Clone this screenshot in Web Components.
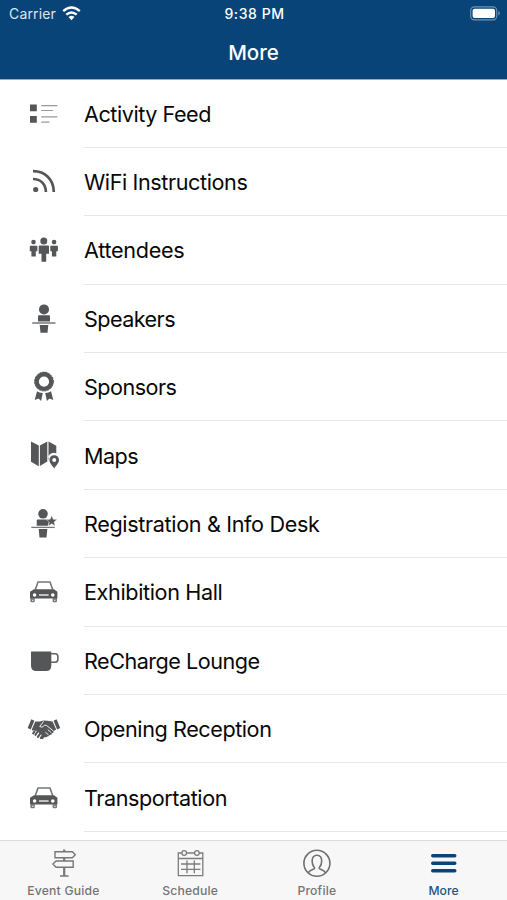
<!DOCTYPE html>
<html lang="en">
<head>
<meta charset="utf-8">
<title>More</title>
<style>
html,body{margin:0;height:100%;overflow:hidden;background:#fff}
body{font-family:Inter,"Liberation Sans",sans-serif}
</style>
</head>
<body>
<more-screen></more-screen>
<script>
const car = `<path d="M11.2 18 14 10h12l2.8 8" fill="none" stroke="#777" stroke-width="1.6"/><path d="M10 17.2h20l3.4 2.6v6.8H6v-6.8z" /><path d="M6.4 26v3.2q0 1 1 1h2.4q1 0 1-1V26zM28.6 26v3.2q0 1 1 1H32q1 0 1-1V26z" fill="#777"/><path d="M8 28.3h1.5M30 28.3h1.5" stroke="#eee"/><circle cx="10.6" cy="23" r="1.8" fill="#fff"/><circle cx="28.8" cy="23" r="1.8" fill="#fff"/><path d="M15 23h9.6" stroke="#ddd" stroke-width="1.6"/>`;
const ICONS = {
feed:`<path d="M6 10.5h6.8v6.8H6zM6 22h6.8v6.8H6z"/><path d="M17.2 11.6h16.2M17.2 16.5h11.8M17.2 22.9h16.2M17.2 28.2h8.2" stroke="#999" stroke-width="1.2"/>`,
wifi:`<circle cx="11.7" cy="27.5" r="2.6"/><path d="M9 17c7.8 0 12.9 5.2 12.9 13.1M9 9.2c12.3 0 20.8 8.6 20.8 20.9" fill="none" stroke="#555658" stroke-width="2.7"/>`,
people:`<circle cx="19.8" cy="11" r="3.5"/><path d="M15.6 15.6h8.5q.9 0 .9.9v7.2h-2.8v8h-4.7v-8h-2.8v-7.2q0-.9.9-.9z"/><circle cx="9.5" cy="12.1" r="2.3"/><circle cx="30.1" cy="12.1" r="2.3"/><path d="M6.3 15.7h6.5q.6 0 .6.6v5h-1.6v5.2H7.4v-5.2H5.8v-5q0-.6.5-.6zM26.8 15.7h6.5q.6 0 .6.6v5h-1.6v5.2h-4.4v-5.2h-1.6v-5q0-.6.5-.6z"/>`,
speaker:`<circle cx="20" cy="10.4" r="5"/><path d="M15 16.3h10q1 0 1 1v5.2H14v-5.2q0-1 1-1zM15.7 26h8.6l-.8 7.7h-7z"/><path d="M8.2 24h23.3" stroke="#999" stroke-width="2"/>`,
sponsor:`<circle cx="20" cy="14.6" r="7.3" fill="none" stroke="#555658" stroke-width="4.4"/><circle cx="20" cy="14.6" r="9.4" fill="none" stroke="#555658" stroke-width="1" stroke-dasharray="2.2 .8"/><path d="M13 24.2q2.6 2 5.8 1.8l-1.7 7.9-2.6-2.5-3.8 1.5zM27 24.2q-2.6 2-5.8 1.8l1.7 7.9 2.6-2.5 3.8 1.5z"/>`,
map:`<path d="m7 5.4 7.8 4.1v20.7L7 25.7zM15.9 9.5l7.4-4v20.1l-7.4 4.5zM24.5 5.5l7.8 4.2v7.6c-5-2.2-9.5 2.2-7.8 7.3z"/><path fill-rule="evenodd" d="M30.2 32.4c-1.1-2-4.8-5-4.8-8.4a4.8 4.8 0 0 1 9.6 0c0 3.4-3.7 6.4-4.8 8.4zm0-6.4a2 2 0 1 0 0-4 2 2 0 0 0 0 4z"/>`,
desk:`<g transform="translate(0 -2.6)"><circle cx="19" cy="12.4" r="4.8"/><path d="M13.7 18.2h9.4l2 2-1.3 4.2H12.7v-5.2q0-1 1-1zM14.7 27.7h8.6l-.8 8.4h-7z"/><path d="M7.3 26h23.4" stroke="#777" stroke-width="1.3"/><path d="m27.7 14 1.5 3.8 4 .2-3.1 2.5 1 4-3.4-2.2-3.4 2.2 1-4-3.1-2.5 4-.2z" stroke="#fff" stroke-width=".4"/></g>`,
car,
cup:`<path d="M7 10.4h20.3v14q0 5.6-5.3 5.6h-9.6Q7 30 7 24.4z"/><path d="M27 12.7h4.2q2.7 0 2.7 3v2.4q0 3.1-2.7 3.1H27" fill="none" stroke="#606163" stroke-width="1.6"/>`,
hands:`<path d="m7.3 10.3 3.1 1.5-3.7 8.6-3-1.5zM32.6 10.3l-3.1 1.5 3.7 8.6 3-1.5z"/><path d="m11.3 12.5 4.4.1 4-1.1 3.7.3 5.2.8 3.6 8-2.4 1.5q.4 2-1.7 2.2-.3 2-2.4 1.8-.8 1.9-2.6 1.3-1.2 1.5-2.7.6l-1.2 1.7q-1.5.9-2.6-.5l1.2-2.4q0-1.8-2-1.8 0-1.8-2-1.8-.3-2-2.5-1.2-1-1.3-2.7-.3L7.8 20.5z"/><path d="m19.6 12.3-3.9 5.2q2.3 2 4.8-1.2l2 .1 7.2 5.8M21.3 23.2l3.3 2.7M23.8 20.7l3.5 3" fill="none" stroke="#fff" stroke-width=".9"/><path d="m10.4 22.5-1.2 1.9M13.3 23l-1.8 2.8M16 24.8l-2.1 3M18.4 26.8l-1.6 2.2" stroke="#555658" stroke-width="2.1" stroke-linecap="round"/>`,
guide:`<g fill="none" stroke="#777" stroke-width="1.4"><path d="M12 8.8h17.3l3 3-3 3H12zM30.2 18H13.1l-3.2 3.1 3.2 3.2h17.1z"/><path d="M21.2 6.4v2.4M21.2 14.8V18M21.2 24.3v8.6" stroke-width="2.2"/><path d="M17 33h8.6" stroke-width="1.5"/></g>`,
calendar:`<g fill="none" stroke="#7c7c7c" stroke-width="1.3"><path d="M12 10H8.3v22.7h24.5V10h-3.6M16.5 10h8.1M8.3 15.5h24.5M11 21h19.4M11 26.4h19.4M17 17.5v12.8M24.3 17.5v12.8"/><circle cx="14.2" cy="10" r="2.3"/><circle cx="26.9" cy="10" r="2.3"/></g>`,
profile:`<g fill="none" stroke="#707070" stroke-width="1.6"><circle cx="19.9" cy="20.3" r="13"/><path d="M11.3 29.8c.8-2.2 3.1-2.9 5.6-3.9q1.2-.6.2-2c-1.2-1.5-2-3.5-2-6 0-3.4 1.9-5.7 4.8-5.7s4.8 2.3 4.8 5.7c0 2.5-.8 4.5-2 6q-1 1.4.2 2c2.5 1 4.8 1.7 5.6 3.9"/></g>`,
menu:`<path d="M8.7 12.7h22.1M8.7 20.2h22.1M8.7 27.7h22.1" stroke="#0b427a" stroke-width="3.4" stroke-linecap="round"/>`
};
function define(name, css, html, ready){
  const t = document.createElement('template');
  t.innerHTML = `<style>${css}</style>${html}`;
  customElements.define(name, class extends HTMLElement{
    connectedCallback(){
      if(this.shadowRoot) return;
      this.attachShadow({mode:'open'}).append(t.content.cloneNode(true));
      if(ready) ready(this, this.shadowRoot);
    }
  });
}
// Spreads the letters of a label over the width given in its "fit" attribute.
function fit(host, el){
  const w = parseFloat(host.getAttribute('fit'));
  if(!w) return;
  const n = host.textContent.trim().length;
  el.style.letterSpacing = ((w - el.getBoundingClientRect().width) / n).toFixed(3) + 'px';
}
define('ui-icon', `:host{display:block;width:40px;height:40px;flex:none}svg{display:block}`,
  `<svg width="40" height="40" viewBox="0 0 40 40" fill="#555658"></svg>`,
  (h, r) => { r.querySelector('svg').innerHTML = ICONS[h.getAttribute('name')]; });
define('fit-text', `:host{display:block;white-space:nowrap}span{display:inline-block}`, `<span><slot></slot></span>`,
  (h, r) => fit(h, r.querySelector('span')));
define('status-bar', `:host{display:grid;grid-template-columns:1fr auto 1fr;align-items:center;height:27px;padding:0 7px 0 9px;color:#fff;font-size:14px}
.l{display:flex;align-items:center;gap:6px;color:#dce6ef}.r{justify-self:end}svg{display:block}.t{font-weight:500}`,
 `<div class="l"><fit-text fit="47">Carrier</fit-text><svg width="19" height="15" viewBox="0 0 19 15" fill="none" stroke="#fff" stroke-width="2.4"><path d="M1.2 5.2q8.3-7.3 16.6 0M4.3 8.7q5.2-4.6 10.4 0"/><path d="m9.5 14.2-3-3.2q3-2.4 6 0z" fill="#fff" stroke="none"/></svg></div>
<fit-text class="t" fit="60">9:38 PM</fit-text>
<div class="r"><svg width="30" height="15" viewBox="0 0 30 15"><rect x=".7" y=".9" width="26" height="13" rx="3.6" fill="none" stroke="#6f93b3" stroke-width="1.1"/><rect x="2.6" y="2.8" width="22.4" height="9.2" rx="2" fill="#fff"/><path d="M28.3 5v4.6q1.5-.6 1.5-2.3T28.3 5z" fill="#6f93b3"/></svg></div>`);
define('nav-header', `:host{display:block;height:80px;background:#094479;color:#fff;box-sizing:border-box;border-bottom:1px solid #8fadc8}
.title{display:flex;justify-content:center;align-items:center;height:51px;font-size:20.5px;font-weight:500}`,
 `<status-bar></status-bar><div class="title"><fit-text fit="49.5"><slot></slot></fit-text></div>`);
define('menu-row', `:host{display:flex;height:68.4px;padding-left:23.6px;box-sizing:border-box;align-items:stretch;color:#080808;font-size:21.6px}
ui-icon{align-self:center}
.body{flex:1;display:flex;align-items:center;box-sizing:border-box;margin-left:20.4px;padding-top:1px;border-bottom:1px solid #e6e6e7}`,
 `<ui-icon></ui-icon><div class="body"><span><slot></slot></span></div>`,
 (h, r) => { const o = r.querySelector('ui-icon'), i = document.createElement('ui-icon'); i.setAttribute('name', h.getAttribute('icon')); o.replaceWith(i); fit(h, r.querySelector('span')); });
define('tab-item', `:host{flex:1;display:flex;flex-direction:column;align-items:center;color:#757575;font-size:12.2px;font-weight:500}
:host([active]){color:#24527f}span{line-height:16px;white-space:nowrap}`,
 `<ui-icon></ui-icon><span><slot></slot></span>`,
 (h, r) => { const o = r.querySelector('ui-icon'), i = document.createElement('ui-icon'); i.setAttribute('name', h.getAttribute('icon')); o.replaceWith(i); fit(h, r.querySelector('span')); });
define('tab-bar', `:host{display:flex;flex:none;height:60px;box-sizing:border-box;padding-top:2px;border-top:1px solid #dcdcdc;background:#f7f7f7}`, `<slot></slot>`);
define('more-screen', `:host{display:flex;flex-direction:column;width:507px;height:900px;background:#fff;overflow:hidden}
nav-header{flex:none}main{flex:1;min-height:0;overflow:hidden}menu-row:first-child{height:67.9px}`,
`<nav-header>More</nav-header>
<main>
<menu-row icon="feed" fit="127">Activity Feed</menu-row>
<menu-row icon="wifi" fit="163.5">WiFi Instructions</menu-row>
<menu-row icon="people" fit="100.5">Attendees</menu-row>
<menu-row icon="speaker" fit="91">Speakers</menu-row>
<menu-row icon="sponsor" fit="92.5">Sponsors</menu-row>
<menu-row icon="map" fit="54">Maps</menu-row>
<menu-row icon="desk" fit="235.5">Registration &amp; Info Desk</menu-row>
<menu-row icon="car" fit="138.5">Exhibition Hall</menu-row>
<menu-row icon="cup" fit="175.5">ReCharge Lounge</menu-row>
<menu-row icon="hands" fit="187.5">Opening Reception</menu-row>
<menu-row icon="car" fit="143">Transportation</menu-row>
</main>
<tab-bar>
<tab-item icon="guide" fit="72.5">Event Guide</tab-item>
<tab-item icon="calendar" fit="56">Schedule</tab-item>
<tab-item icon="profile" fit="39">Profile</tab-item>
<tab-item icon="menu" fit="30.5" active>More</tab-item>
</tab-bar>`);
</script>
</body>
</html>
